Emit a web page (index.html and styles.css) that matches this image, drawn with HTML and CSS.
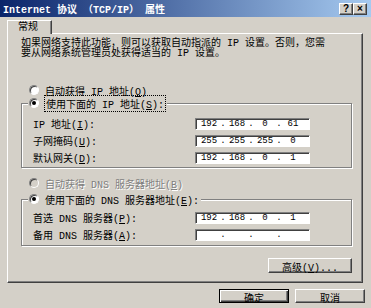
FILE: index.html
```html
<!DOCTYPE html>
<html lang="zh-CN">
<head>
    <meta charset="UTF-8">
    <title>Internet 协议 (TCP/IP) 属性</title>
    <link rel="stylesheet" href="styles.css">
</head>
<body>
    <div class="titlebar">
        <span class="title">Internet 协议 （TCP/IP） 属性</span>
        <div class="title-buttons">
            <span class="title-btn">?</span>
            <span class="title-btn close">×</span>
        </div>
    </div>

    <div class="content">
        <div class="tabs">
            <span class="tab">常规</span>
        </div>

        <div class="panel">
            <p class="intro">如果网络支持此功能，则可以获取自动指派的 IP 设置。否则，您需<br>要从网络系统管理员处获得适当的 IP 设置。</p>

            <div class="option first">
                <span class="radio"></span>
                <span>自动获得 IP 地址(<u>O</u>)</span>
            </div>

            <fieldset class="group">
                <legend class="option">
                    <span class="radio checked"></span>
                    <span class="focus">使用下面的 IP 地址(<u>S</u>):</span>
                </legend>
                <div class="field-row">
                    <span>IP 地址(<u>I</u>):</span>
                    <span class="ip-box"><span class="seg">192</span><span class="dot">.</span><span class="seg">168</span><span class="dot">.</span><span class="seg">0</span><span class="dot">.</span><span class="seg">61</span></span>
                </div>
                <div class="field-row">
                    <span>子网掩码(<u>U</u>):</span>
                    <span class="ip-box"><span class="seg">255</span><span class="dot">.</span><span class="seg">255</span><span class="dot">.</span><span class="seg">255</span><span class="dot">.</span><span class="seg">0</span></span>
                </div>
                <div class="field-row">
                    <span>默认网关(<u>D</u>):</span>
                    <span class="ip-box"><span class="seg">192</span><span class="dot">.</span><span class="seg">168</span><span class="dot">.</span><span class="seg">0</span><span class="dot">.</span><span class="seg">1</span></span>
                </div>
            </fieldset>

            <div class="option disabled">
                <span class="radio"></span>
                <span>自动获得 DNS 服务器地址(<u>B</u>)</span>
            </div>

            <fieldset class="group dns">
                <legend class="option">
                    <span class="radio checked"></span>
                    <span>使用下面的 DNS 服务器地址(<u>E</u>):</span>
                </legend>
                <div class="field-row">
                    <span>首选 DNS 服务器(<u>P</u>):</span>
                    <span class="ip-box"><span class="seg">192</span><span class="dot">.</span><span class="seg">168</span><span class="dot">.</span><span class="seg">0</span><span class="dot">.</span><span class="seg">1</span></span>
                </div>
                <div class="field-row">
                    <span>备用 DNS 服务器(<u>A</u>):</span>
                    <span class="ip-box"><span class="seg"></span><span class="dot">.</span><span class="seg"></span><span class="dot">.</span><span class="seg"></span><span class="dot">.</span><span class="seg"></span></span>
                </div>
            </fieldset>

            <div class="panel-actions">
                <button class="btn advanced">高级(<u>V</u>)...</button>
            </div>
        </div>

        <div class="dialog-actions">
            <button class="btn default">确定</button>
            <button class="btn">取消</button>
        </div>
    </div>
</body>
</html>
```

FILE: styles.css
```css
* {
    box-sizing: border-box;
}

body {
    margin: 0;
    width: 371px;
    height: 308px;
    overflow: hidden;
    background: #d4d0c8;
    color: #000;
    font-family: "Liberation Mono", "Noto Sans CJK SC", monospace;
    font-size: 10px;
}

u {
    text-decoration: underline;
    text-underline-offset: 1px;
}

.titlebar {
    height: 17px;
    display: flex;
    align-items: center;
    justify-content: space-between;
    padding: 0 4px 0 3px;
    background: linear-gradient(to right, #0a246a, #a6caf0);
}

.title {
    color: #fff;
    font-weight: bold;
    white-space: nowrap;
}

.title-buttons {
    display: flex;
}

.title-btn {
    width: 14px;
    height: 12px;
    background: #d4d0c8;
    border: 1px solid;
    border-color: #fff #404040 #404040 #fff;
    box-shadow: inset -1px -1px 0 #808080;
    font: bold 10px/10px "Liberation Sans", sans-serif;
    text-align: center;
}

.content {
    padding: 3px 8px 0 7px;
}

.tabs {
    display: flex;
}

.tab {
    position: relative;
    z-index: 1;
    width: 45px;
    height: 14px;
    margin-bottom: -1px;
    padding-left: 10px;
    line-height: 13px;
    background: #d4d0c8;
    border: 1px solid;
    border-color: #fff #404040 transparent #fff;
    border-bottom: none;
    box-shadow: inset -1px 0 0 #808080;
}

.panel {
    height: 250px;
    padding: 5px 10px 0 13px;
    border: 1px solid;
    border-color: #fff #404040 #404040 #fff;
    box-shadow: inset -1px -1px 0 #808080;
}

.intro {
    margin: 0;
    line-height: 10px;
    white-space: nowrap;
}

.option {
    display: flex;
    align-items: center;
    gap: 6px;
    height: 12px;
    white-space: nowrap;
}

.option.first {
    margin-top: 25px;
    padding-left: 8px;
}

.option.disabled {
    margin-top: 9px;
    padding-left: 8px;
    color: #808080;
    text-shadow: 1px 1px 0 #fff;
}

.radio {
    position: relative;
    width: 10px;
    height: 10px;
    flex: none;
    border-radius: 50%;
    background: #fff;
    border: 1px solid;
    border-color: #808080 #fff #fff #808080;
    box-shadow: inset 1px 1px 0 #404040;
}

.option.disabled .radio {
    background: #d4d0c8;
}

.radio.checked::after {
    content: "";
    position: absolute;
    left: 2px;
    top: 2px;
    width: 4px;
    height: 4px;
    border-radius: 50%;
    background: #000;
}

.focus {
    outline: 1px dotted #000;
    outline-offset: 0;
    padding: 0 1px;
}

.group {
    margin: 1px 0 0;
    padding: 7px 0 5px 6px;
    border: 1px solid #808080;
    box-shadow: 1px 1px 0 #fff, inset 1px 1px 0 #fff;
}

.group.dns {
    margin-top: 4px;
    padding-top: 5px;
    padding-bottom: 6px;
}

.group legend {
    padding: 0 2px 0 1px;
    background: #d4d0c8;
}

.field-row {
    display: grid;
    grid-template-columns: 162px 115px;
    align-items: center;
    height: 12px;
    margin-left: 5px;
    white-space: nowrap;
}

.field-row + .field-row {
    margin-top: 5px;
}

.ip-box {
    display: flex;
    align-items: center;
    height: 12px;
    padding-left: 2px;
    background: #fff;
    border: 1px solid;
    border-color: #808080 #fff #fff #808080;
    box-shadow: inset 1px 1px 0 #404040;
    font-size: 9px;
}

.seg {
    width: 22px;
    text-align: center;
}

.dot {
    width: 6px;
    text-align: center;
}

.panel-actions {
    display: flex;
    justify-content: flex-end;
    margin-top: 12px;
}

.btn {
    height: 15px;
    padding: 0;
    font: inherit;
    color: #000;
    background: #d4d0c8;
    border: 1px solid;
    border-color: #fff #404040 #404040 #fff;
    box-shadow: inset -1px -1px 0 #808080;
}

.advanced {
    width: 84px;
}

.dialog-actions {
    display: flex;
    justify-content: flex-end;
    gap: 6px;
    margin: 6px -2px 0 0;
}

.dialog-actions .btn {
    width: 70px;
    height: 14px;
}

.btn.default {
    border-color: #000;
    box-shadow: inset 1px 1px 0 #fff, inset -1px -1px 0 #404040, inset -2px -2px 0 #808080;
}
```
